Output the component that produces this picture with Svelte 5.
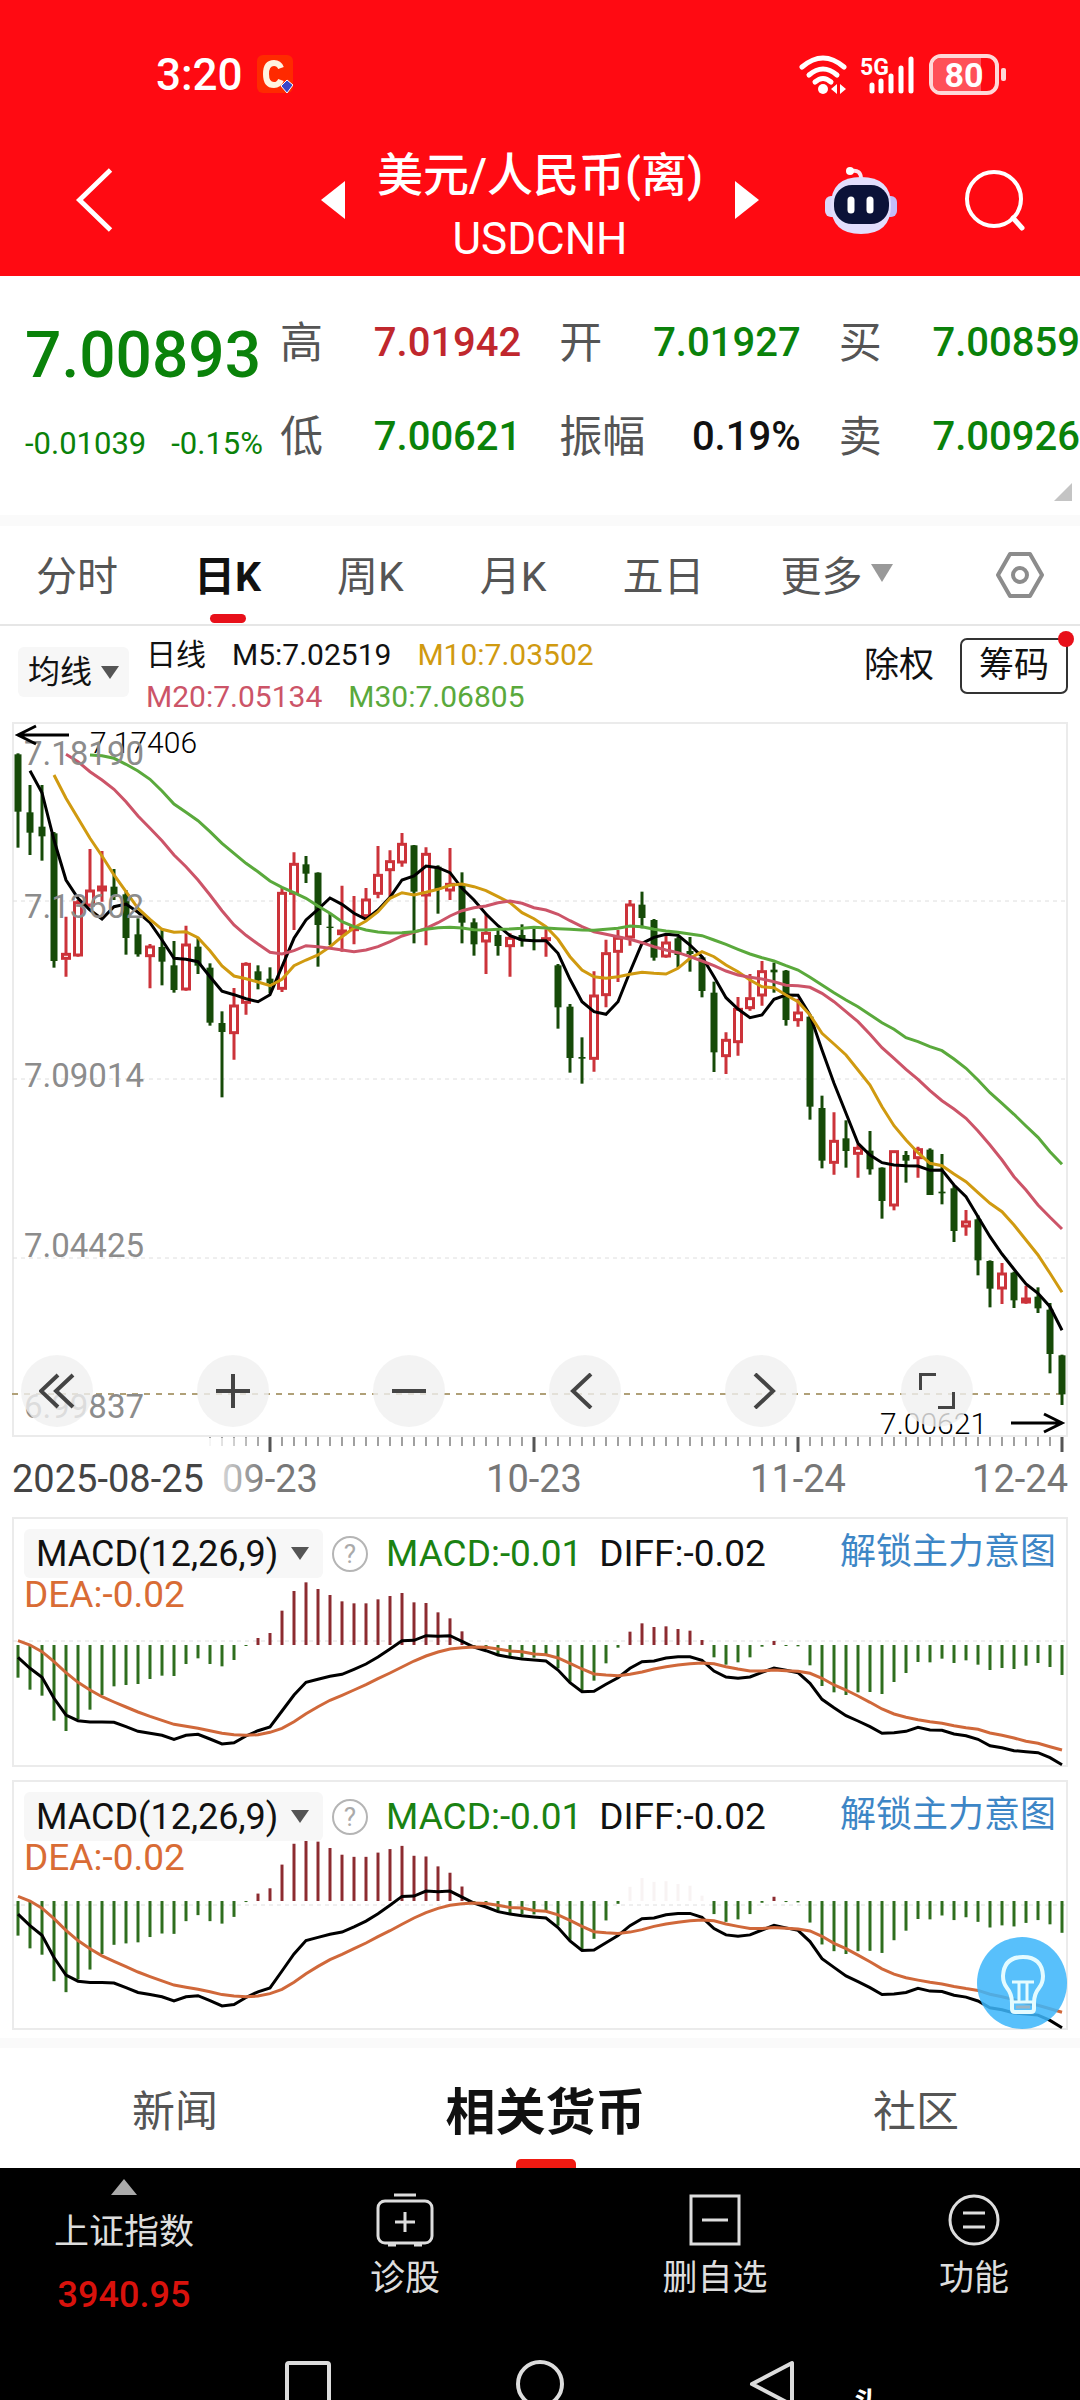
<script>
	// each candle: [high, body top, body bottom, low, rising]
	// levels are counted down from the top of the pane, three steps per chart unit
	const candles = [
		[160, 163, 335, 443, 0], [255, 337, 398, 465, 0], [255, 380, 409, 482, 0], [396, 400, 783, 803, 0],
		[650, 760, 778, 830, 1], [600, 605, 768, 770, 1], [447, 570, 618, 620, 1], [453, 558, 573, 605, 1],
		[507, 560, 590, 600, 0], [570, 583, 714, 764, 0], [655, 703, 763, 770, 0], [732, 738, 770, 865, 1],
		[690, 741, 785, 856, 0], [723, 796, 870, 878, 0], [677, 732, 870, 872, 1], [713, 740, 797, 822, 0],
		[790, 803, 968, 977, 0], [934, 969, 996, 1192, 0], [864, 915, 1001, 1079, 1], [787, 790, 910, 944, 1],
		[796, 814, 841, 868, 0], [802, 836, 850, 880, 0], [563, 577, 868, 876, 1], [457, 490, 583, 690, 1],
		[468, 493, 521, 549, 0], [517, 518, 675, 800, 0], [640, 680, 684, 735, 0], [557, 690, 704, 755, 1],
		[588, 680, 692, 733, 1], [564, 597, 650, 660, 1], [438, 523, 583, 595, 1], [451, 482, 512, 590, 1],
		[399, 430, 489, 500, 1], [435, 436, 575, 730, 0], [442, 460, 588, 736, 1], [496, 500, 568, 641, 0],
		[444, 550, 573, 600, 1], [517, 555, 668, 730, 0], [655, 667, 733, 767, 0], [640, 697, 726, 822, 1],
		[690, 705, 738, 767, 0], [700, 712, 740, 830, 1], [673, 705, 722, 740, 0], [683, 720, 726, 751, 0],
		[688, 713, 722, 770, 1], [792, 796, 922, 986, 0], [912, 920, 1074, 1118, 0], [1012, 1071, 1076, 1151, 0],
		[814, 885, 1078, 1115, 1], [719, 758, 887, 922, 1], [690, 712, 757, 846, 1], [600, 612, 714, 737, 1],
		[575, 614, 654, 685, 0], [657, 660, 773, 782, 0], [707, 726, 771, 773, 1], [710, 715, 765, 803, 0],
		[711, 753, 762, 815, 0], [768, 772, 873, 892, 0], [845, 878, 1057, 1116, 0], [997, 1018, 1070, 1122, 1],
		[891, 925, 1028, 1067, 1], [822, 893, 926, 932, 1], [783, 812, 888, 917, 1], [788, 809, 817, 878, 0],
		[810, 812, 960, 977, 0], [896, 936, 962, 980, 1], [946, 950, 1220, 1259, 0], [1187, 1224, 1382, 1405, 0],
		[1237, 1321, 1390, 1424, 1], [1261, 1315, 1353, 1403, 0], [1333, 1342, 1363, 1433, 1], [1293, 1352, 1408, 1424, 0],
		[1402, 1403, 1503, 1556, 0], [1352, 1352, 1518, 1531, 1], [1353, 1365, 1382, 1448, 0], [1340, 1346, 1376, 1433, 1],
		[1345, 1349, 1485, 1485, 0], [1362, 1475, 1480, 1513, 0], [1456, 1465, 1593, 1626, 0], [1530, 1563, 1581, 1607, 1],
		[1546, 1558, 1681, 1726, 0], [1681, 1683, 1766, 1822, 0], [1689, 1719, 1767, 1812, 1], [1715, 1718, 1801, 1824, 0],
		[1757, 1794, 1809, 1811, 1], [1762, 1790, 1825, 1839, 0], [1809, 1829, 1962, 2020, 0], [1964, 1966, 2083, 2115, 0]
	]

	const averages = [
		{
			color: '#000', start: 1,
			values: [212, 278, 420, 540, 595, 630, 657, 620, 612, 637, 668, 720, 775, 778, 785, 830, 874, 884, 896, 905, 884, 800, 715, 660, 628, 594, 613, 640, 658, 630, 592, 540, 528, 498, 503, 518, 565, 600, 642, 677, 707, 720, 722, 722, 760, 838, 905, 935, 943, 905, 815, 730, 712, 703, 706, 735, 770, 830, 893, 927, 953, 945, 898, 885, 886, 945, 1050, 1150, 1240, 1330, 1365, 1388, 1395, 1397, 1398, 1411, 1410, 1455, 1490, 1550, 1610, 1662, 1708, 1752, 1780, 1820, 1891]
		},
		{
			color: '#d09a10', start: 3,
			values: [225, 295, 355, 415, 468, 525, 575, 625, 658, 688, 697, 695, 713, 752, 798, 828, 836, 846, 857, 838, 797, 780, 765, 740, 710, 683, 663, 635, 595, 578, 585, 577, 568, 556, 552, 560, 572, 590, 608, 638, 656, 680, 718, 770, 810, 830, 835, 830, 823, 817, 820, 822, 805, 775, 755, 770, 795, 815, 840, 860, 863, 885, 905, 945, 1000, 1032, 1065, 1110, 1155, 1220, 1277, 1320, 1358, 1390, 1397, 1422, 1445, 1478, 1510, 1535, 1575, 1620, 1665, 1720, 1777]
		},
		{
			color: '#cc5468', start: 4,
			values: [163, 185, 215, 240, 268, 305, 348, 385, 422, 465, 500, 540, 585, 632, 675, 706, 732, 757, 762, 752, 737, 740, 745, 750, 755, 750, 740, 725, 708, 697, 685, 668, 648, 632, 623, 618, 608, 603, 610, 623, 630, 643, 662, 680, 695, 703, 710, 718, 728, 740, 750, 758, 770, 783, 797, 813, 825, 832, 837, 845, 856, 857, 862, 880, 905, 935, 965, 1003, 1043, 1075, 1108, 1138, 1172, 1202, 1227, 1255, 1293, 1335, 1380, 1430, 1470, 1515, 1552, 1587]
		},
		{
			color: '#5aa93c', start: 6,
			values: [165, 167, 175, 193, 213, 238, 273, 312, 337, 362, 395, 430, 460, 490, 515, 543, 562, 578, 595, 618, 640, 665, 680, 690, 696, 699, 698, 695, 688, 683, 682, 684, 689, 690, 688, 687, 685, 682, 684, 686, 688, 690, 691, 688, 685, 678, 680, 688, 693, 697, 702, 707, 720, 733, 748, 762, 773, 783, 797, 810, 832, 855, 878, 900, 920, 944, 968, 988, 1013, 1025, 1040, 1052, 1077, 1105, 1140, 1178, 1210, 1243, 1278, 1312, 1355, 1393]
		}
	]

	const bars = [-98, -134, -152, -227, -258, -222, -194, -150, -124, -120, -117, -102, -92, -93, -57, -40, -57, -64, -45, -3, 21, 36, 103, 162, 188, 168, 150, 131, 125, 125, 137, 147, 156, 128, 126, 98, 80, 41, -5, -12, -28, -36, -38, -38, -28, -70, -110, -140, -107, -55, -8, 40, 65, 54, 56, 48, 43, 15, -37, -59, -52, -37, -5, 12, -3, -4, -61, -123, -142, -150, -142, -141, -147, -111, -84, -51, -52, -41, -54, -46, -59, -75, -69, -72, -62, -54, -66, -90]
	const diff = [1072, 1105, 1132, 1195, 1245, 1262, 1266, 1266, 1267, 1280, 1294, 1300, 1306, 1318, 1306, 1303, 1317, 1332, 1328, 1308, 1292, 1281, 1233, 1185, 1147, 1138, 1129, 1123, 1108, 1092, 1071, 1047, 1022, 1021, 1007, 1009, 1007, 1024, 1041, 1052, 1065, 1072, 1077, 1080, 1083, 1110, 1148, 1175, 1174, 1153, 1133, 1105, 1085, 1083, 1074, 1070, 1070, 1081, 1113, 1131, 1135, 1131, 1117, 1104, 1111, 1118, 1150, 1198, 1223, 1247, 1263, 1280, 1300, 1298, 1294, 1282, 1290, 1291, 1302, 1307, 1318, 1337, 1343, 1352, 1355, 1358, 1373, 1394]
	const dea = [1022, 1035, 1055, 1085, 1118, 1147, 1170, 1190, 1206, 1221, 1236, 1249, 1261, 1273, 1279, 1285, 1292, 1300, 1304, 1306, 1304, 1297, 1285, 1265, 1241, 1220, 1201, 1186, 1170, 1154, 1136, 1119, 1101, 1083, 1068, 1056, 1047, 1043, 1041, 1042, 1047, 1053, 1055, 1062, 1064, 1074, 1090, 1107, 1122, 1125, 1127, 1123, 1116, 1107, 1100, 1095, 1091, 1089, 1091, 1100, 1107, 1113, 1113, 1110, 1112, 1114, 1120, 1135, 1155, 1170, 1188, 1207, 1227, 1242, 1252, 1259, 1265, 1270, 1277, 1283, 1288, 1299, 1306, 1314, 1324, 1330, 1340, 1350]
	const MACD_ZERO = 1035

	const panes = [
		{ id: 'macd-1', base: 128, scale: 1, rule: 124 },
		{ id: 'macd-2', base: 121, scale: 1.06, rule: 125, faded: true }
	]

	const quotes = [
		{ label: '高', value: '7.01942', tone: 'up' },
		{ label: '开', value: '7.01927', tone: 'down' },
		{ label: '买', value: '7.00859', tone: 'down' },
		{ label: '低', value: '7.00621', tone: 'down' },
		{ label: '振幅', value: '0.19%', tone: 'flat' },
		{ label: '卖', value: '7.00926', tone: 'down' }
	]

	const gridLines = [179, 357, 536]
	const priceLabels = [
		{ text: '7.18190', y: 43 },
		{ text: '7.13602', y: 196 },
		{ text: '7.09014', y: 365 },
		{ text: '7.04425', y: 535 },
		{ text: '6.99837', y: 696 }
	]

	const periods = ['分时', '日K', '周K', '月K', '五日']
	const sections = ['新闻', '相关货币', '社区']
	let period = $state('日K')
	let section = $state('相关货币')

	const x = (i) => 6 + i * 12
	const y = (v) => v / 3 - 22
	const line = (values, start, toY) => values.map((v, i) => `${x(i + start)},${toY(v).toFixed(1)}`).join(' ')
	const ticks = Array.from({ length: 72 }, (_, i) => i + 16)
</script>

<div class="page">
	<header>
		<div class="status">
			<span class="time">3:20</span>
			<svg class="app" viewBox="0 0 36 40" aria-hidden="true">
				<rect x="0" y="0" width="36" height="38" rx="6" fill="#ff2a00" />
				<path d="M24 13 Q22 8 17 8 Q9 8 9 19 Q9 30 17 30 Q22 30 24 25" fill="none" stroke="#fff3e0" stroke-width="6" />
				<path d="M24 31 L30 25 L36 30 L30 38 Z" fill="#3b46c8" stroke="#fff" stroke-width="1" />
			</svg>
			<svg class="signals" viewBox="0 0 210 44" aria-hidden="true">
				<g fill="none" stroke="#fff" stroke-width="5" stroke-linecap="round">
					<path d="M5 14 Q26 -4 47 14" />
					<path d="M12 22 Q26 10 40 22" />
					<path d="M18 29 Q26 22 34 29" />
				</g>
				<circle cx="26" cy="36" r="5" fill="#fff" />
				<path d="M34 36 L40 31 V41 Z M49 36 L43 31 V41 Z" fill="#fff" />
				<text x="63" y="22" font-size="23" font-weight="700" fill="#fff">5G</text>
				<g stroke="#fff" stroke-width="5" stroke-linecap="round">
					<path d="M75 32 V38 M84 28 V38 M94 23 V38 M104 15 V38 M114 6 V38" />
				</g>
				<rect x="134" y="3" width="66" height="37" rx="10" fill="none" stroke="#ffd8d8" stroke-width="4" />
				<path d="M144 5 H184 V38 H144 Q136 38 136 30 V13 Q136 5 144 5 Z" fill="#ff5058" />
				<rect x="204" y="15" width="5" height="13" rx="2" fill="#ffd8d8" />
				<text x="167" y="34" font-size="34" font-weight="700" fill="#fff" text-anchor="middle">80</text>
			</svg>
		</div>
		<div class="titlebar">
			<button class="back" aria-label="返回">
				<svg viewBox="0 0 40 68"><path d="M36 3 L4 34 L36 65" fill="none" stroke="#fff" stroke-width="5" /></svg>
			</button>
			<div class="symbol">
				<button aria-label="上一个"><svg viewBox="0 0 24 38"><path d="M24 0 V38 L0 19 Z" fill="#fff" /></svg></button>
				<h1>美元/人民币(离)<small>USDCNH</small></h1>
				<button aria-label="下一个"><svg viewBox="0 0 24 38"><path d="M0 0 V38 L24 19 Z" fill="#fff" /></svg></button>
			</div>
			<button class="robot" aria-label="智能助手">
				<svg viewBox="0 0 74 70">
					<path d="M37 14 Q37 4 27 6" fill="none" stroke="#fbe4f0" stroke-width="4" />
					<circle cx="26" cy="6" r="4" fill="#fff" />
					<rect x="1" y="31" width="14" height="21" rx="6" fill="#dcd8fa" />
					<rect x="59" y="31" width="14" height="21" rx="6" fill="#c3bcf8" />
					<path d="M37 12 Q67 12 67 40 Q67 69 37 69 Q7 69 7 40 Q7 12 37 12 Z" fill="#e2defc" />
					<rect x="10" y="20" width="55" height="39" rx="18" fill="#0b1238" />
					<path d="M27 35 V45 M46 35 V45" stroke="#fff" stroke-width="7" stroke-linecap="round" />
				</svg>
			</button>
			<button class="search" aria-label="搜索">
				<svg viewBox="0 0 62 62"><circle cx="30" cy="30" r="27" fill="none" stroke="#fff" stroke-width="4" /><path d="M49 49 L58 59" stroke="#fff" stroke-width="5" stroke-linecap="round" /></svg>
			</button>
		</div>
	</header>

	<section class="quote">
		<div class="last">
			<strong>7.00893</strong>
			<p><span>-0.01039</span><span>-0.15%</span></p>
		</div>
		<dl>
			{#each quotes as item}
				<div>
					<dt>{item.label}</dt>
					<dd class={item.tone}>{item.value}</dd>
				</div>
			{/each}
		</dl>
		<svg class="corner" viewBox="0 0 18 18" aria-hidden="true"><path d="M18 0 V18 H0 Z" fill="#c4c4c4" /></svg>
	</section>

	<nav class="periods">
		{#each periods as name}
			<button class:active={period === name} onclick={() => (period = name)}>{name}</button>
		{/each}
		<button>更多<svg class="caret" viewBox="0 0 22 18"><path d="M0 0 H22 L11 18 Z" fill="#999" /></svg></button>
		<button class="gear" aria-label="设置">
			<svg viewBox="0 0 48 48" fill="none" stroke="#8c8c8c" stroke-width="4">
				<path d="M14 3 H34 L46 24 L34 45 H14 L2 24 Z" stroke-linejoin="round" />
				<circle cx="24" cy="24" r="7" />
			</svg>
		</button>
	</nav>

	<section class="legend">
		<label class="picker">
			<select aria-label="均线">
				<option>均线</option>
			</select>
			<svg viewBox="0 0 18 13"><path d="M0 0 H18 L9 13 Z" fill="#555" /></svg>
		</label>
		<div class="values">
			<span>日线</span><span>M5:7.02519</span><span class="m10">M10:7.03502</span>
			<br />
			<span class="m20">M20:7.05134</span><span class="m30">M30:7.06805</span>
		</div>
		<button class="plain">除权</button>
		<button class="chips">筹码</button>
	</section>

	<section class="chart">
		<svg viewBox="0 0 1056 795" role="img" aria-label="日K线">
			<defs>
				<linearGradient id="fade">
					<stop offset="0" stop-color="#fff" />
					<stop offset="1" stop-color="#fff" stop-opacity="0" />
				</linearGradient>
			</defs>
			<rect x="1" y="1" width="1054" height="713" fill="none" stroke="#ebebeb" stroke-width="2" />
			{#each gridLines as gy}
				<line x1="1" x2="1054" y1={gy} y2={gy} stroke="#dedede" stroke-width="1" stroke-dasharray="4 4" />
			{/each}
			<line x1="0" x2="1050" y1="672" y2="672" stroke="#b0a078" stroke-width="2" stroke-dasharray="6 6" />
			<text class="extreme" x="78" y="31">7.17406</text>
			{#each candles as [high, top, bottom, low, rising], i}
				{#if rising}
					<path d="M{x(i)} {y(high)} V{y(top)} M{x(i)} {y(bottom)} V{y(low)}" stroke="#cc333a" stroke-width="3" />
					<rect x={x(i) - 3.5} y={y(top) + 1} width="7" height={Math.max((bottom - top) / 3 - 2, 1)} fill="#fff" stroke="#cc333a" stroke-width="3" />
				{:else}
					<line x1={x(i)} x2={x(i)} y1={y(high)} y2={y(low)} stroke="#164a08" stroke-width="3" />
					<rect x={x(i) - 3.5} y={y(top)} width="7" height={(bottom - top) / 3} fill="#164a08" />
				{/if}
			{/each}
			{#each averages as avg}
				<polyline points={line(avg.values, avg.start, y)} fill="none" stroke={avg.color} stroke-width="3" />
			{/each}
			{#each priceLabels as label}
				<text class="price" x="12" y={label.y}>{label.text}</text>
			{/each}
			<path d="M57 13 H6 M24 4 L6 13 L24 22" fill="none" stroke="#000" stroke-width="3" />
			<text class="extreme" x="868" y="712">7.00621</text>
			<path d="M999 701 H1050 M1032 692 L1050 701 L1032 710" fill="none" stroke="#000" stroke-width="3" />

			{#each ticks as i}
				{#if (i - 21) % 22 === 0}
					<line x1={x(i)} x2={x(i)} y1="715" y2="730" stroke="#555" stroke-width="3" />
				{:else}
					<line x1={x(i)} x2={x(i)} y1="715" y2="724" stroke="#777" stroke-width="1.4" />
				{/if}
			{/each}
			<g class="dates">
				<text x="258" y="770" text-anchor="middle">09-23</text>
				<text x="522" y="770" text-anchor="middle">10-23</text>
				<text x="786" y="770" text-anchor="middle">11-24</text>
				<text x="1056" y="770" text-anchor="end">12-24</text>
				<rect x="192" y="716" width="60" height="64" fill="url(#fade)" />
				<text x="0" y="770" class="first">2025-08-25</text>
			</g>
		</svg>
		<div class="tools">
			<button aria-label="最早"><svg viewBox="0 0 36 36"><path d="M19 2 L2 18 L19 34 M34 2 L17 18 L34 34" /></svg></button>
			<button aria-label="放大"><svg viewBox="0 0 36 36"><path d="M18 1 V35 M1 18 H35" /></svg></button>
			<button aria-label="缩小"><svg viewBox="0 0 36 36"><path d="M1 18 H35" /></svg></button>
			<button aria-label="左移"><svg viewBox="0 0 36 36"><path d="M24 1 L6 18 L24 35" /></svg></button>
			<button aria-label="右移"><svg viewBox="0 0 36 36"><path d="M12 1 L30 18 L12 35" /></svg></button>
			<button aria-label="全屏"><svg viewBox="0 0 36 36"><path d="M1 17 V1 H17 M35 19 V35 H19" /></svg></button>
		</div>
	</section>

	{#each panes as pane}
		<section class="macd">
			<svg class="plot" viewBox="0 0 1056 250" role="img" aria-label="MACD">
				<rect x="1" y="1" width="1054" height="248" fill="none" stroke="#ebebeb" stroke-width="2" />
				<line x1="1" x2="1054" y1={pane.rule} y2={pane.rule} stroke="#dedede" stroke-dasharray="4 4" />
				{#each bars as v, i}
					<line
						x1={x(i)}
						x2={x(i)}
						y1={pane.base}
						y2={pane.base - (v / 3) * pane.scale}
						stroke={v > 0 ? '#8c2b30' : '#2f6e1e'}
						stroke-width="3"
						opacity={pane.faded && i > 50 && i < 58 ? 0.05 : 1} />
				{/each}
				<polyline points={line(diff, 0, (v) => pane.base + ((v - MACD_ZERO) / 3) * pane.scale)} fill="none" stroke="#000" stroke-width="3" />
				<polyline points={line(dea, 0, (v) => pane.base + ((v - MACD_ZERO) / 3) * pane.scale)} fill="none" stroke="#d0683a" stroke-width="3" />
			</svg>
			<div class="readout">
				<label class="picker">
					<select id={pane.id} aria-label="指标">
						<option>MACD(12,26,9)</option>
					</select>
					<svg viewBox="0 0 18 13"><path d="M0 0 H18 L9 13 Z" fill="#555" /></svg>
				</label>
				<button class="help" aria-label="说明">?</button>
				<span class="bar-value">MACD:-0.01</span>
				<span>DIFF:-0.02</span>
				<a href="#unlock">解锁主力意图</a>
			</div>
			<span class="dea-value">DEA:-0.02</span>
			{#if pane.faded}
				<button class="tip" aria-label="提示">
					<svg viewBox="0 0 90 92" fill="none" stroke="#e4fbff" stroke-width="4" stroke-linejoin="round">
						<path d="M35 66 Q35 57 30 51 Q26 46 26 39 Q27 20 46 20 Q65 20 66 39 Q66 46 62 51 Q57 57 57 66 V72 Q57 75 54 75 H38 Q35 75 35 72 Z" />
						<path d="M35 45 H57 M42 46 V64 M50 46 V64 M36 65 H56" stroke-width="3" />
						<path d="M39 70 H53" stroke="#9bb4c4" stroke-width="3" />
					</svg>
				</button>
			{/if}
		</section>
	{/each}

	<nav class="sections">
		{#each sections as name}
			<button class:active={section === name} onclick={() => (section = name)}>{name}</button>
		{/each}
	</nav>

	<footer>
		<nav class="actions">
			<a class="index" href="#index">
				<svg viewBox="0 0 26 16"><path d="M13 0 L26 16 H0 Z" fill="#aaa" /></svg>
				<span>上证指数</span>
				<b>3940.95</b>
			</a>
			<button>
				<svg viewBox="0 0 58 54">
					<rect x="2" y="8" width="54" height="42" rx="7" />
					<path d="M18 2 H40 M29 19 V39 M19 29 H39 M12 52 H20 M38 52 H46" />
				</svg>
				诊股
			</button>
			<button>
				<svg viewBox="0 0 58 54"><rect x="5" y="3" width="48" height="48" /><path d="M16 27 H42" /></svg>
				删自选
			</button>
			<button>
				<svg viewBox="0 0 58 54"><circle cx="29" cy="27" r="24" /><path d="M18 20 H40 M18 34 H40" /></svg>
				功能
			</button>
		</nav>
		<div class="system">
			<button aria-label="最近任务"><svg viewBox="0 0 48 48"><rect x="3" y="3" width="42" height="42" rx="2" /></svg></button>
			<button aria-label="主页"><svg viewBox="0 0 48 48"><circle cx="24" cy="24" r="22" /></svg></button>
			<button aria-label="后退"><svg viewBox="0 0 48 48"><path d="M44 3 V45 L4 24 Z" stroke-linejoin="round" /></svg></button>
			<span class="mark">头</span>
		</div>
	</footer>
</div>

<style>
	:global(body) {
		background: #000;
	}

	.page {
		background: #fff;
		color: #111;
		font-family: Roboto, 'Noto Sans CJK SC', sans-serif;
		overflow: hidden;
	}

	svg {
		display: block;
	}

	button,
	select {
		padding: 0;
		border: 0;
		background: none;
		color: inherit;
		font: inherit;
		cursor: pointer;
	}

	a {
		color: inherit;
		text-decoration: none;
	}

	header {
		height: 276px;
		background: #ff0a12;
		color: #fff;
	}

	.status {
		display: flex;
		align-items: center;
		height: 98px;
		padding: 26px 73px 0 156px;
	}

	.time {
		font-size: 44px;
		font-weight: 500;
	}

	.app {
		width: 36px;
		height: 40px;
		margin-left: 14px;
	}

	.signals {
		width: 210px;
		height: 44px;
		margin-left: auto;
	}

	.titlebar {
		display: grid;
		grid-template-columns: 246px 1fr 74px 128px;
		align-items: center;
		height: 152px;
		padding: 0 54px 0 75px;
	}

	.back svg {
		width: 40px;
		height: 66px;
	}

	.symbol {
		display: flex;
		align-items: center;
		justify-content: space-between;
		width: 438px;
	}

	.symbol svg {
		width: 24px;
		height: 38px;
	}

	h1 {
		margin: 0;
		padding-top: 14px;
		font-size: 46px;
		font-weight: 500;
		line-height: 64px;
		text-align: center;
	}

	small {
		display: block;
		font-size: 44px;
		font-weight: 400;
	}

	.robot svg {
		width: 74px;
		height: 70px;
	}

	.search {
		justify-self: end;
	}

	.search svg {
		width: 62px;
		height: 62px;
	}

	.quote {
		position: relative;
		display: flex;
		height: 239px;
		border-bottom: 11px solid #fafafa;
	}

	.last {
		width: 280px;
		flex: none;
		padding-left: 25px;
		box-sizing: border-box;
		color: #0a820a;
	}

	.last strong {
		display: block;
		margin-top: 40px;
		font-size: 64px;
		font-weight: 500;
		line-height: 80px;
	}

	.last p {
		display: flex;
		gap: 25px;
		margin: 28px 0 0;
		font-size: 31px;
		line-height: 40px;
		white-space: nowrap;
	}

	dl {
		display: grid;
		flex: 1;
		grid-template-columns: repeat(3, 1fr);
		column-gap: 38px;
		row-gap: 34px;
		align-content: start;
		margin: 37px 0 0;
	}

	dl div {
		display: flex;
		justify-content: space-between;
		align-items: center;
		line-height: 60px;
	}

	dt {
		color: #555;
		font-size: 43px;
	}

	dd {
		margin: 0;
		font-size: 40px;
		font-weight: 500;
	}

	.up {
		color: #c0272d;
	}

	.down {
		color: #0a820a;
	}

	.corner {
		position: absolute;
		right: 8px;
		bottom: 14px;
		width: 18px;
		height: 18px;
	}

	.periods {
		display: flex;
		align-items: center;
		gap: 76px;
		height: 98px;
		padding: 0 36px;
		border-bottom: 2px solid #e6e6e6;
		color: #555;
		font-size: 41px;
	}

	.periods button {
		position: relative;
		display: flex;
		align-items: center;
		box-sizing: border-box;
		height: 98px;
		padding-bottom: 4px;
		white-space: nowrap;
	}

	.active {
		color: #111;
		font-weight: 700;
	}

	.periods .active::after {
		content: '';
		position: absolute;
		bottom: 1px;
		left: 50%;
		width: 36px;
		height: 9px;
		margin-left: -18px;
		border-radius: 5px;
		background: #e8101a;
	}

	.caret {
		width: 22px;
		height: 18px;
		margin-left: 8px;
	}

	.periods .gear {
		margin-left: auto;
		padding: 0;
	}

	.gear svg {
		width: 48px;
		height: 48px;
	}

	.legend {
		display: flex;
		align-items: flex-start;
		box-sizing: border-box;
		height: 96px;
		padding: 8px 12px 0 18px;
	}

	.picker {
		display: flex;
		align-items: center;
		gap: 12px;
		border-radius: 6px;
		background: #f7f7f7;
	}

	.picker select {
		appearance: none;
		overflow: visible;
	}

	.picker svg {
		width: 18px;
		height: 13px;
		pointer-events: none;
	}

	.legend .picker {
		gap: 8px;
		height: 50px;
		margin-top: 13px;
		padding: 0 10px;
		font-size: 32px;
	}

	.values {
		flex: 1;
		margin-left: 17px;
		font-size: 30px;
		line-height: 42px;
		white-space: nowrap;
	}

	.values span {
		margin-right: 26px;
	}

	.m10 {
		color: #d09a10;
	}

	.m20 {
		color: #cc5468;
	}

	.m30 {
		color: #5aa93c;
	}

	.plain,
	.chips {
		height: 56px;
		margin-top: 4px;
		font-size: 35px;
		line-height: 50px;
	}

	.plain {
		margin-right: 26px;
	}

	.chips {
		position: relative;
		padding: 0 17px;
		border: 2px solid #333;
		border-radius: 7px;
	}

	.chips::after {
		content: '';
		position: absolute;
		top: -9px;
		right: -8px;
		width: 16px;
		height: 16px;
		border-radius: 50%;
		background: #e8101a;
	}

	.chart {
		position: relative;
		margin: 0 12px;
	}

	.extreme {
		fill: #000;
		font-size: 30px;
		font-weight: 300;
	}

	.price {
		fill: #8c8c8c;
		font-size: 33px;
	}

	.dates {
		fill: #777;
		font-size: 38px;
	}

	.first {
		fill: #444;
	}

	.tools {
		position: absolute;
		top: 633px;
		left: 9px;
		right: 95px;
		display: flex;
		justify-content: space-between;
	}

	.tools button {
		width: 72px;
		height: 72px;
		border-radius: 50%;
		background: rgba(240, 240, 240, 0.8);
	}

	.tools svg {
		width: 36px;
		height: 36px;
		margin: auto;
		fill: none;
		stroke: #444;
		stroke-width: 4;
	}

	.macd {
		position: relative;
		margin: 0 12px 13px;
	}

	.readout {
		position: absolute;
		top: 12px;
		left: 12px;
		right: 12px;
		display: flex;
		align-items: center;
		height: 49px;
		font-size: 37px;
		line-height: 48px;
		white-space: nowrap;
	}

	.readout .picker {
		height: 49px;
		padding: 0 14px 0 12px;
		font-size: 36px;
	}

	.help {
		width: 36px;
		height: 36px;
		margin: 0 18px 0 9px;
		border: 2px solid #b5b5b5;
		border-radius: 50%;
		color: #aaa;
		font-size: 26px;
		line-height: 30px;
	}

	.bar-value {
		margin-right: 17px;
		color: #1a8212;
	}

	.readout a {
		margin-left: auto;
		padding-bottom: 3px;
		color: #3d86c6;
		font-size: 36px;
	}

	.dea-value {
		position: absolute;
		top: 56px;
		left: 12px;
		color: #d96c35;
		font-size: 37px;
		line-height: 44px;
	}

	.tip {
		position: absolute;
		right: 1px;
		bottom: 1px;
		width: 90px;
		height: 92px;
		border-radius: 50%;
		background: rgba(60, 182, 250, 0.86);
	}

	.sections {
		display: flex;
		align-items: center;
		justify-content: space-between;
		height: 120px;
		margin-top: -5px;
		padding: 0 121px 0 132px;
		border-top: 10px solid #fafafa;
		color: #555;
		font-size: 43px;
	}

	.sections button {
		position: relative;
		height: 120px;
	}

	.sections .active {
		font-size: 50px;
	}

	.sections .active::after {
		content: '';
		position: absolute;
		bottom: 0;
		left: 50%;
		width: 60px;
		height: 9px;
		margin-left: -30px;
		border-radius: 5px 5px 0 0;
		background: #f01a12;
	}

	footer {
		background: #000;
		color: #ddd;
	}

	.actions {
		display: grid;
		grid-template-columns: 248fr 314fr 306fr 212fr;
		height: 184px;
		font-size: 35px;
	}

	.actions button,
	.index {
		display: flex;
		flex-direction: column;
		align-items: center;
		line-height: 52px;
	}

	.actions button {
		padding-top: 25px;
	}

	.actions button svg {
		width: 58px;
		height: 54px;
		margin-bottom: 6px;
		fill: none;
		stroke: #ddd;
		stroke-width: 3;
	}

	.index {
		padding-top: 11px;
	}

	.index svg {
		width: 26px;
		height: 16px;
		margin-bottom: 12px;
	}

	.index b {
		margin-top: 10px;
		color: #d8120c;
		font-size: 36px;
		font-weight: 500;
	}

	.system {
		position: relative;
		display: flex;
		justify-content: center;
		gap: 184px;
		height: 48px;
		overflow: hidden;
	}

	.system button {
		align-self: flex-start;
		padding-top: 8px;
	}

	.system svg {
		width: 48px;
		height: 48px;
		fill: none;
		stroke: #ddd;
		stroke-width: 4;
	}

	.mark {
		position: absolute;
		top: 36px;
		left: 79%;
		color: #fff;
		font-size: 28px;
		font-weight: 700;
		line-height: 32px;
	}
</style>
